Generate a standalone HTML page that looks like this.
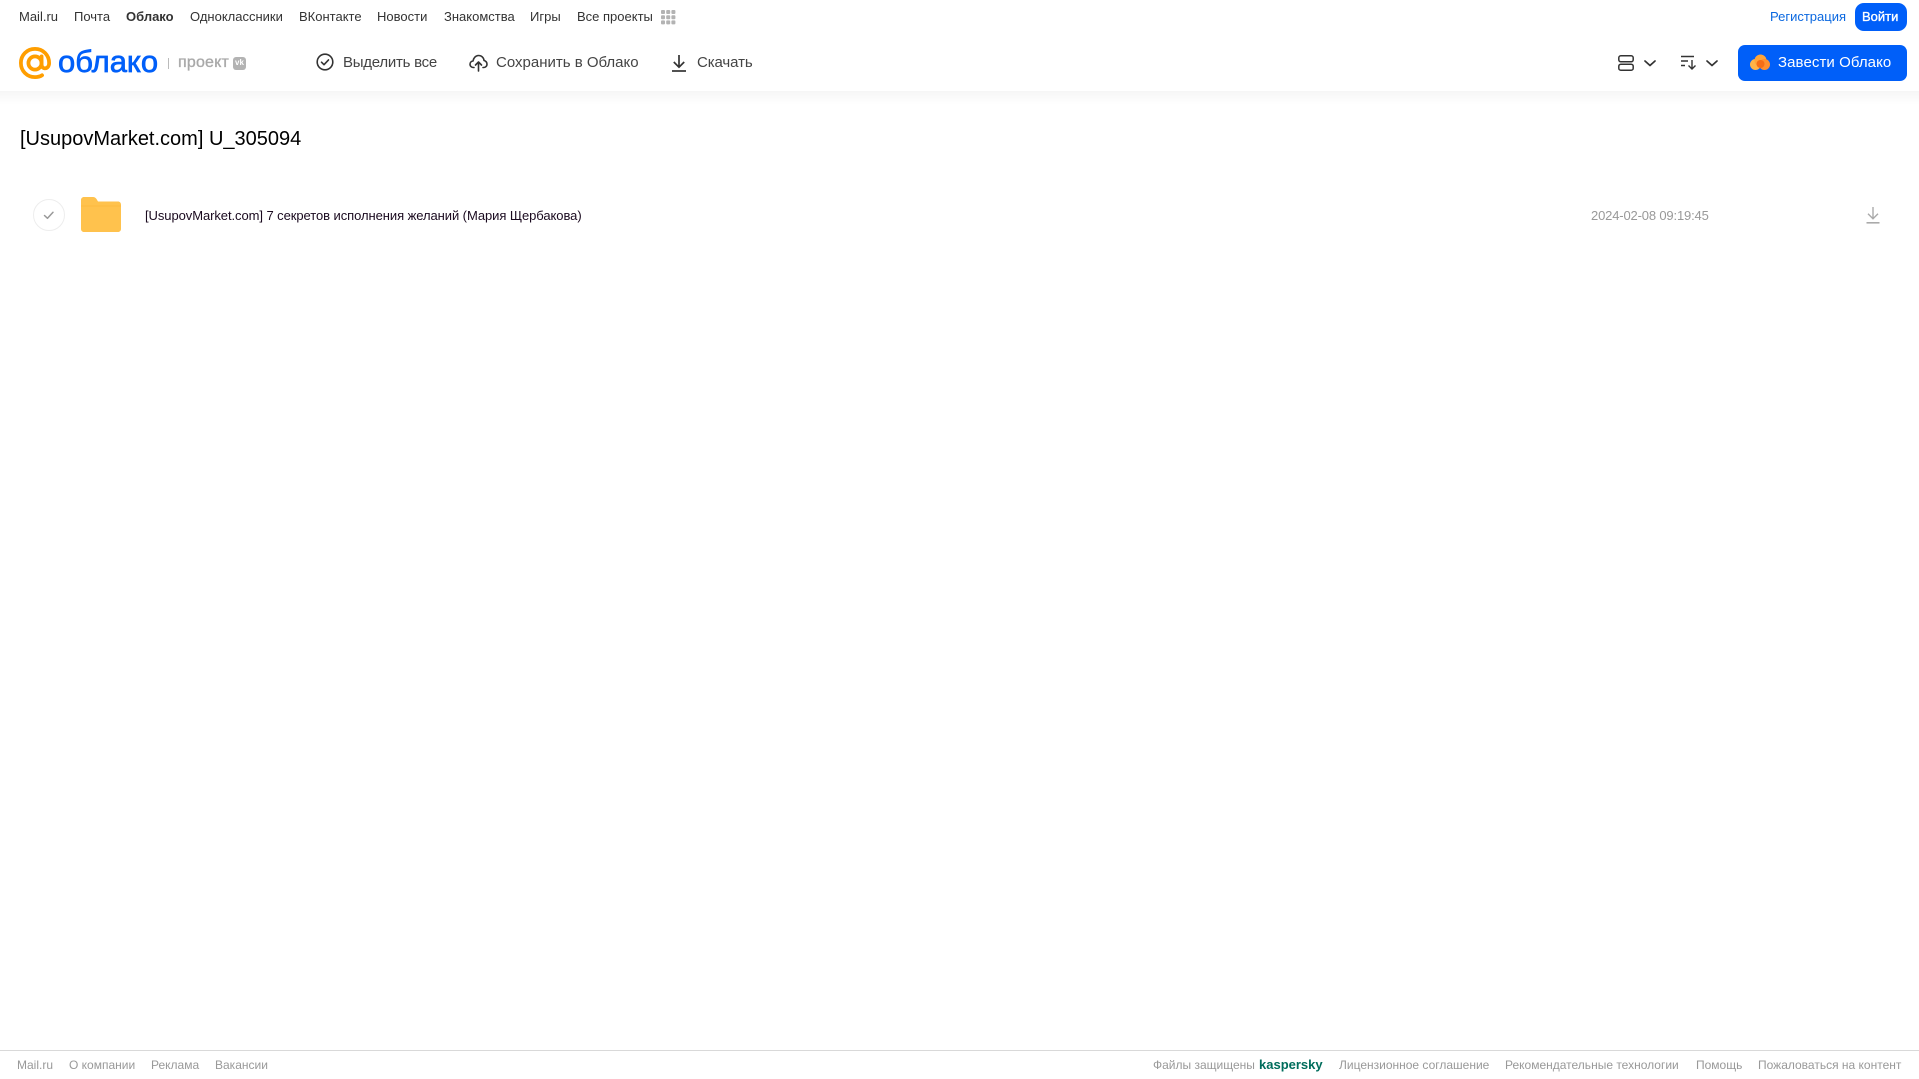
<!DOCTYPE html>
<html lang="ru">
<head>
<meta charset="utf-8">
<title>[UsupovMarket.com] U_305094</title>
<style>
html,body{margin:0;padding:0;background:#fff;}
body{position:relative;width:1919px;height:1079px;overflow:hidden;font-family:"Liberation Sans",Arial,sans-serif;}
.t{position:absolute;white-space:nowrap;line-height:20px;height:20px;}
.n{top:7px;font-size:13px;color:#333;}
.b{top:53px;font-size:15px;color:#444;}
.f{top:1055px;font-size:12px;color:#999;}
svg{position:absolute;overflow:visible;}
.shadow{position:absolute;left:0;top:91px;width:1919px;height:14px;background:linear-gradient(#f6f6f6,#fff);}
</style>
</head>
<body>
<div class="shadow"></div>

<span class="t n" style="left:19px">Mail.ru</span>
<span class="t n" style="left:74px">Почта</span>
<span class="t n" style="left:126px;font-weight:bold">Облако</span>
<span class="t n" style="left:190px">Одноклассники</span>
<span class="t n" style="left:299px">ВКонтакте</span>
<span class="t n" style="left:377px">Новости</span>
<span class="t n" style="left:444px">Знакомства</span>
<span class="t n" style="left:530px">Игры</span>
<span class="t n" style="left:577px">Все проекты</span>
<svg style="left:661px;top:10px" width="15" height="15" fill="#b3b3b3">
<rect x="0" y="0" width="4" height="4" rx="1"/><rect x="5.200" y="0" width="4" height="4" rx="1"/><rect x="10.400" y="0" width="4" height="4" rx="1"/>
<rect x="0" y="5.200" width="4" height="4" rx="1"/><rect x="5.200" y="5.200" width="4" height="4" rx="1"/><rect x="10.400" y="5.200" width="4" height="4" rx="1"/>
<rect x="0" y="10.400" width="4" height="4" rx="1"/><rect x="5.200" y="10.400" width="4" height="4" rx="1"/><rect x="10.400" y="10.400" width="4" height="4" rx="1"/>
</svg>

<span class="t n" style="left:1770px;color:#0b68e0">Регистрация</span>
<div style="position:absolute;left:1855px;top:3px;width:52px;height:28px;background:#005ff9;border-radius:9px"></div>
<span class="t n" style="left:1862px;color:#fff;-webkit-text-stroke:.35px #fff">Войти</span>

<svg style="left:19px;top:47px" width="32" height="32" viewBox="0 0 34 34" fill="none" stroke="#ff9e00" stroke-width="4">
<circle cx="17" cy="17" r="7"/>
<path d="M24 10v8.500c0 6 8 5.500 8-1.500C32 8.500 25.500 2 17 2S2 8.500 2 17s6.500 15 15 15c3 0 5.500-.7 7.500-2" stroke-linecap="round"/>
</svg>
<span class="t" style="left:58px;top:43px;height:38px;line-height:38px;font-size:31px;color:#005ff9;-webkit-text-stroke:.7px #005ff9">облако</span>
<div style="position:absolute;left:168px;top:58px;width:1px;height:11px;background:#bbb"></div>
<span class="t" style="left:178px;top:53px;font-size:16px;color:#a9a9a9;-webkit-text-stroke:.35px #a9a9a9;letter-spacing:.2px">проект</span>
<div style="position:absolute;left:233px;top:57px;width:13px;height:13px;background:#b3b3b3;border-radius:3px"></div>
<span class="t" style="left:235px;top:53px;font-size:8px;font-weight:bold;color:#fff">vk</span>

<svg style="left:316px;top:53px" width="18" height="18" viewBox="0 0 18 18" fill="none" stroke="#333" stroke-width="1.6">
<circle cx="9" cy="9" r="7.800"/><path d="M5.500 9.200l2.500 2.500 4.500-4.800" stroke-linecap="round" stroke-linejoin="round"/>
</svg>
<span class="t b" style="left:343px;letter-spacing:-.25px">Выделить все</span>
<svg style="left:469px;top:54px" width="19" height="18" viewBox="0 0 19 18" fill="none" stroke="#333" stroke-width="1.6" stroke-linecap="round" stroke-linejoin="round">
<path d="M5 13.500H4.500C2.500 13.500 1 12 1 10.200 1 8.500 2.300 7.200 4 7 4.500 3.800 6.800 1.500 9.500 1.500 12.500 1.500 14.800 3.700 15 6.500 16.800 7 18 8.400 18 10.200 18 12 16.500 13.500 14.500 13.500H14"/>
<path d="M9.500 17V8.500M6.500 11l3-3 3 3"/>
</svg>
<span class="t b" style="left:496px">Сохранить в Облако</span>
<svg style="left:672px;top:54px" width="14" height="18" viewBox="0 0 14 18" fill="none" stroke="#333" stroke-width="1.7">
<path d="M7 1v12M1.800 8L7 13.200 12.200 8"/><path d="M0 17h14"/>
</svg>
<span class="t b" style="left:697px;letter-spacing:-.1px">Скачать</span>

<svg style="left:1618px;top:55px" width="16" height="16" viewBox="0 0 16 16" fill="none" stroke="#333" stroke-width="1.5">
<rect x=".8" y=".8" width="14.400" height="6" rx="2"/><rect x=".8" y="9.200" width="14.400" height="6" rx="2"/>
</svg>
<svg style="left:1644px;top:60px" width="12" height="7" viewBox="0 0 12 7" fill="none" stroke="#333" stroke-width="1.700" stroke-linecap="round" stroke-linejoin="round">
<path d="M1 1l5 4.500L11 1"/>
</svg>
<svg style="left:1681px;top:55px" width="16" height="15" viewBox="0 0 16 15" fill="none" stroke="#333" stroke-width="1.400">
<path d="M0 1.500h13M0 6h7M0 10.500h4"/><path d="M11 5v9M7.500 10.500L11 14l3.500-3.500"/>
</svg>
<svg style="left:1706px;top:60px" width="12" height="7" viewBox="0 0 12 7" fill="none" stroke="#333" stroke-width="1.700" stroke-linecap="round" stroke-linejoin="round">
<path d="M1 1l5 4.500L11 1"/>
</svg>

<div style="position:absolute;left:1738px;top:45px;width:169px;height:36px;background:#005ff9;border-radius:7px"></div>
<svg style="left:1750px;top:54px" width="20" height="17" viewBox="0 0 20 17">
<circle cx="5.500" cy="10.500" r="5.500" fill="#ffb347"/>
<circle cx="10.500" cy="6.500" r="6" fill="#ffa53a"/>
<circle cx="14.500" cy="10.500" r="5.500" fill="#ff8f2e"/>
<circle cx="10.500" cy="10" r="4" fill="#f56d16"/>
</svg>
<span class="t" style="left:1778px;top:53px;font-size:15px;color:#fff;letter-spacing:.08px">Завести Облако</span>

<span class="t" style="left:20px;top:127px;height:24px;line-height:24px;font-size:20px;color:#000">[UsupovMarket.com] U_305094</span>

<svg style="left:33px;top:199px" width="32" height="32" viewBox="0 0 32 32" fill="none">
<circle cx="16" cy="16" r="15.500" stroke="#ededed"/>
<path d="M11.500 16.500l3 2.800 5.500-6" stroke="#999" stroke-width="1.500" stroke-linecap="round" stroke-linejoin="round"/>
</svg>
<svg style="left:81px;top:197px" width="40" height="35" viewBox="0 0 40 35">
<path d="M0 3C0 1.300 1.300 0 3 0h9c1.500 0 2.500.7 3.500 2L17 4.500h20c1.700 0 3 1.300 3 3V32c0 1.700-1.300 3-3 3H3c-1.700 0-3-1.300-3-3z" fill="#ffc24d"/>
<path d="M0 8.500h40v1H0z" fill="#fdb93f"/>
</svg>
<span class="t" style="left:145px;top:206px;font-size:13px;letter-spacing:-.07px;color:#1a0a1f">[UsupovMarket.com] 7 секретов исполнения желаний (Мария Щербакова)</span>
<span class="t" style="left:1591px;top:206px;font-size:13px;letter-spacing:-.16px;color:#999">2024-02-08 09:19:45</span>
<svg style="left:1866px;top:207px" width="14" height="17" viewBox="0 0 14 17" fill="none" stroke="#aaa" stroke-width="1.400">
<path d="M7 0v11.500M2 6.800L7 11.800 12 6.800"/><path d="M0.500 15.800h13" stroke-width="1.600"/>
</svg>

<div style="position:absolute;left:0;top:1050px;width:1919px;height:1px;background:#d9d9d9"></div>
<span class="t f" style="left:17px">Mail.ru</span>
<span class="t f" style="left:69px">О компании</span>
<span class="t f" style="left:151px">Реклама</span>
<span class="t f" style="left:215px">Вакансии</span>
<span class="t f" style="left:1153px">Файлы защищены</span>
<span class="t f" style="left:1259px;color:#006d5c;font-weight:bold;font-size:13px">kaspersky</span>
<span class="t f" style="left:1339px">Лицензионное соглашение</span>
<span class="t f" style="left:1505px">Рекомендательные технологии</span>
<span class="t f" style="left:1696px">Помощь</span>
<span class="t f" style="left:1758px">Пожаловаться на контент</span>
</body>
</html>
